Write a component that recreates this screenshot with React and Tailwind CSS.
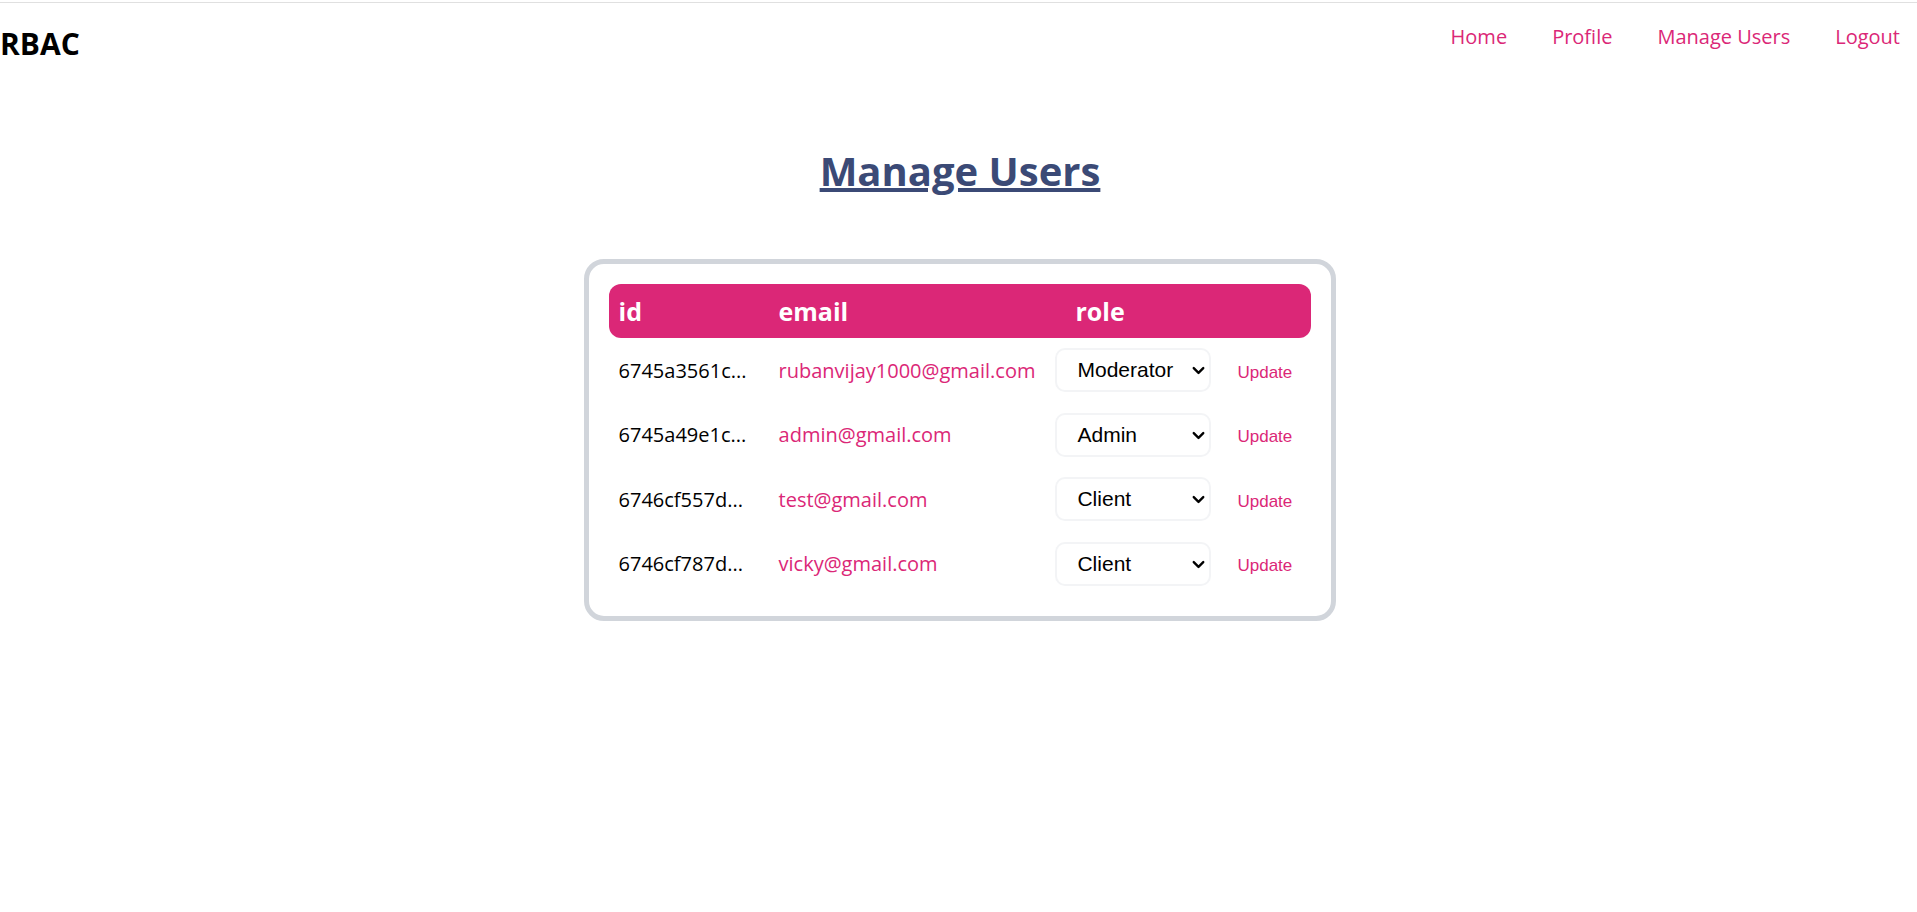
import { ChevronDown } from "lucide-react";

const navLinks = ["Home", "Profile", "Manage Users", "Logout"];

const roles = ["Admin", "Moderator", "Client"];

const users = [
  { id: "6745a3561c...", email: "rubanvijay1000@gmail.com", role: "Moderator" },
  { id: "6745a49e1c...", email: "admin@gmail.com", role: "Admin" },
  { id: "6746cf557d...", email: "test@gmail.com", role: "Client" },
  { id: "6746cf787d...", email: "vicky@gmail.com", role: "Client" },
];

function Header() {
  return (
    <header className="mt-[2px] flex items-start justify-between border-t border-[#e0e0e0] pt-5">
      <a href="#" className="text-[30px] leading-[42px] font-bold text-black">
        RBAC
      </a>
      <nav className="flex gap-[45px] pr-[17px] text-[20px] leading-7 text-[#db2777]">
        {navLinks.map((label) => (
          <a key={label} href="#">
            {label}
          </a>
        ))}
      </nav>
    </header>
  );
}

function RoleSelect({ user }) {
  return (
    <div className="relative w-[156px]">
      <select
        aria-label={`Role for ${user.email}`}
        defaultValue={user.role}
        className="block h-11 w-full appearance-none rounded-[10px] border-2 border-[#f3f4f6] bg-white pr-8 pl-5 font-['Liberation_Sans',sans-serif] text-[21px] text-black"
      >
        {roles.map((role) => (
          <option key={role}>{role}</option>
        ))}
      </select>
      <ChevronDown
        size={19}
        strokeWidth={3}
        className="pointer-events-none absolute top-[13px] right-[3px]"
      />
    </div>
  );
}

function UserRow({ user }) {
  return (
    <tr className="odd:h-[65px] even:h-16">
      <td className="w-40 px-[10px]">{user.id}</td>
      <td className="px-[10px] text-[#db2777]">{user.email}</td>
      <td className="px-[10px] pt-[10px] align-top">
        <RoleSelect user={user} />
      </td>
      <td className="w-[90px] px-4">
        <button
          type="button"
          className="block pt-1 font-['Liberation_Sans',sans-serif] text-[17px] leading-6 text-[#db2777]"
        >
          Update
        </button>
      </td>
    </tr>
  );
}

export default function App() {
  return (
    <div className="min-h-screen bg-white font-['Open_Sans',sans-serif] text-black">
      <Header />
      <main className="flex flex-col items-center pt-[76px] pl-[3px]">
        <h1 className="text-[40px] leading-[60px] font-bold text-[#3b4a76] underline decoration-4 underline-offset-2">
          Manage Users
        </h1>
        <section className="mt-[58px] rounded-[20px] border-5 border-[#d1d5db] p-5">
          <table className="text-left text-[20px] leading-7">
            <thead>
              <tr className="h-[54px] text-[25px] text-white">
                <th className="rounded-l-xl bg-[#db2777] px-[10px]">id</th>
                <th className="bg-[#db2777] px-[10px]">email</th>
                <th className="bg-[#db2777] px-[30px]">role</th>
                <th className="rounded-r-xl bg-[#db2777]" aria-label="actions" />
              </tr>
            </thead>
            <tbody>
              {users.map((user) => (
                <UserRow key={user.id} user={user} />
              ))}
            </tbody>
          </table>
        </section>
      </main>
    </div>
  );
}
